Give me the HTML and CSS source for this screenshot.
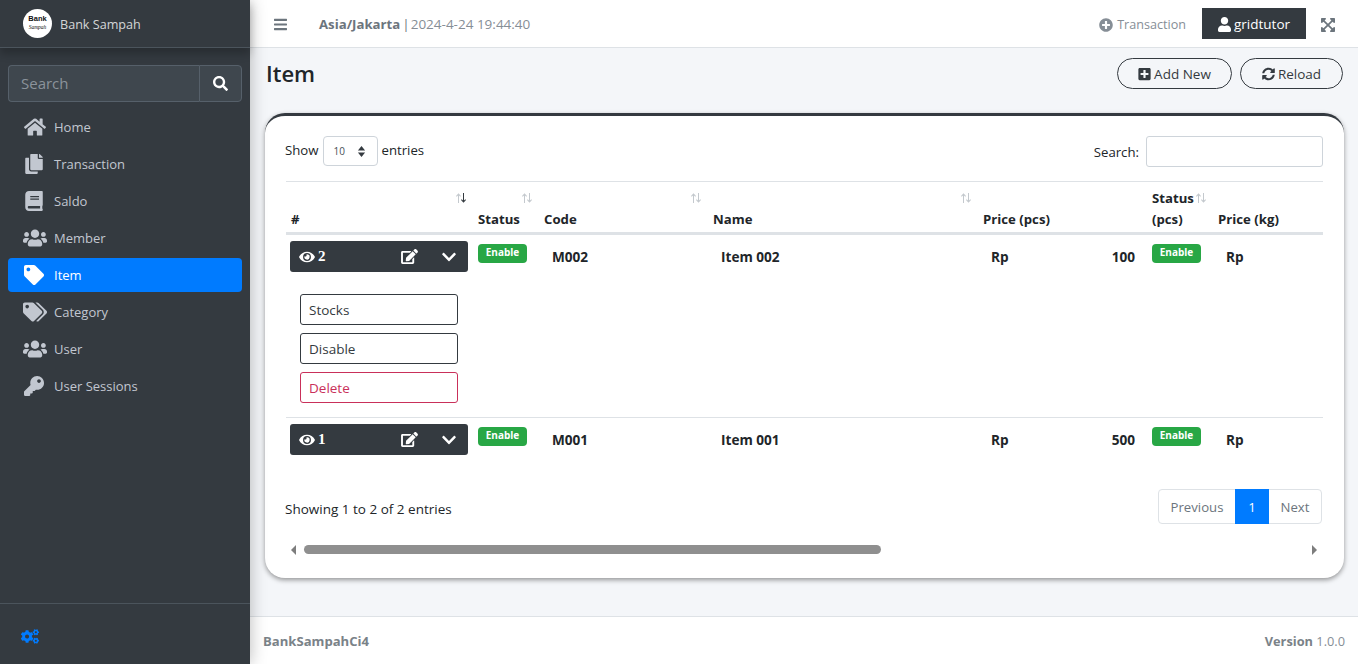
FILE: index.html
```html
<!DOCTYPE html>
<html lang="en">
<head>
<meta charset="utf-8">
<title>Item - Bank Sampah</title>
<link rel="stylesheet" href="styles.css">
</head>
<body>
<svg class="defs" aria-hidden="true">
<symbol id="i-home" viewBox="0 0 576 512"><path d="M280.37 148.26L96 300.11V464a16 16 0 0 0 16 16l112.06-.29a16 16 0 0 0 15.92-16V368a16 16 0 0 1 16-16h64a16 16 0 0 1 16 16v95.64a16 16 0 0 0 16 16.05L464 480a16 16 0 0 0 16-16V300L295.67 148.26a12.19 12.19 0 0 0-15.3 0zM571.6 251.47L488 182.56V44.05a12 12 0 0 0-12-12h-56a12 12 0 0 0-12 12v72.61L318.47 43a48 48 0 0 0-61 0L4.34 251.47a12 12 0 0 0-1.6 16.9l25.5 31A12 12 0 0 0 45.15 301l235.22-193.74a12.19 12.19 0 0 1 15.3 0L530.9 301a12 12 0 0 0 16.9-1.6l25.5-31a12 12 0 0 0-1.7-16.93z"/></symbol>
<symbol id="i-copy" viewBox="0 0 448 512"><path d="M320 448v40c0 13.255-10.745 24-24 24H24c-13.255 0-24-10.745-24-24V120c0-13.255 10.745-24 24-24h72v296c0 30.879 25.121 56 56 56h168zm0-344V0H152c-13.255 0-24 10.745-24 24v368c0 13.255 10.745 24 24 24h272c13.255 0 24-10.745 24-24V128H344c-13.2 0-24-10.8-24-24zm120.971-31.029L375.029 7.029A24 24 0 0 0 358.059 0H352v96h96v-6.059a24 24 0 0 0-7.029-16.97z"/></symbol>
<symbol id="i-book" viewBox="0 0 448 512"><path d="M448 360V24c0-13.3-10.7-24-24-24H96C43 0 0 43 0 96v320c0 53 43 96 96 96h328c13.3 0 24-10.7 24-24v-16c0-7.5-3.5-14.3-8.9-18.7-4.2-15.4-4.2-59.3 0-74.7 5.4-4.3 8.9-11.1 8.9-18.6zM128 134c0-3.3 2.7-6 6-6h212c3.3 0 6 2.7 6 6v20c0 3.3-2.7 6-6 6H134c-3.3 0-6-2.7-6-6v-20zm0 64c0-3.3 2.7-6 6-6h212c3.3 0 6 2.7 6 6v20c0 3.3-2.7 6-6 6H134c-3.3 0-6-2.7-6-6v-20zm253.4 250H96c-17.7 0-32-14.3-32-32 0-17.6 14.4-32 32-32h285.4c-1.9 17.1-1.9 46.9 0 64z"/></symbol>
<symbol id="i-users" viewBox="0 0 640 512"><path d="M96 224c35.3 0 64-28.7 64-64s-28.7-64-64-64-64 28.7-64 64 28.7 64 64 64zm448 0c35.3 0 64-28.7 64-64s-28.7-64-64-64-64 28.7-64 64 28.7 64 64 64zm32 32h-64c-17.6 0-33.5 7.1-45.1 18.6 40.3 22.1 68.9 62 75.1 109.4h66c17.7 0 32-14.3 32-32v-32c0-35.3-28.7-64-64-64zm-256 0c61.9 0 112-50.1 112-112S381.9 32 320 32 208 82.1 208 144s50.1 112 112 112zm76.8 32h-8.3c-20.8 10-43.9 16-68.5 16s-47.6-6-68.5-16h-8.3C179.6 288 128 339.6 128 403.2V432c0 26.5 21.5 48 48 48h288c26.5 0 48-21.5 48-48v-28.8c0-63.6-51.6-115.2-115.2-115.2zm-223.7-13.4C161.5 263.1 145.6 256 128 256H64c-35.3 0-64 28.7-64 64v32c0 17.7 14.3 32 32 32h65.9c6.3-47.4 34.9-87.3 75.2-109.4z"/></symbol>
<symbol id="i-tag" viewBox="0 0 512 512"><path d="M0 252.118V48C0 21.49 21.49 0 48 0h204.118a48 48 0 0 1 33.941 14.059l211.882 211.882c18.745 18.745 18.745 49.137 0 67.882L293.823 497.941c-18.745 18.745-49.137 18.745-67.882 0L14.059 286.059A48 48 0 0 1 0 252.118zM112 64c-26.51 0-48 21.49-48 48s21.49 48 48 48 48-21.49 48-48-21.49-48-48-48z"/></symbol>
<symbol id="i-tags" viewBox="0 0 640 512"><path d="M497.941 225.941L286.059 14.059A48 48 0 0 0 252.118 0H48C21.49 0 0 21.49 0 48v204.118a48 48 0 0 0 14.059 33.941l211.882 211.882c18.744 18.745 49.136 18.746 67.882 0l204.118-204.118c18.745-18.745 18.745-49.137 0-67.882zM112 160c-26.51 0-48-21.49-48-48s21.49-48 48-48 48 21.49 48 48-21.49 48-48 48zm513.941 133.823L421.823 497.941c-18.745 18.745-49.137 18.745-67.882 0l-.36-.36L527.64 323.522c16.999-16.999 26.36-39.6 26.36-63.64s-9.362-46.641-26.36-63.64L331.397 0h48.721a48 48 0 0 1 33.941 14.059l211.882 211.882c18.745 18.745 18.745 49.137 0 67.882z"/></symbol>
<symbol id="i-key" viewBox="0 0 512 512"><path d="M512 176.001C512 273.203 433.202 352 336 352c-11.22 0-22.19-1.062-32.827-3.069l-24.012 27.014A23.999 23.999 0 0 1 261.223 384H224v40c0 13.255-10.745 24-24 24h-40v40c0 13.255-10.745 24-24 24H24c-13.255 0-24-10.745-24-24v-78.059c0-6.365 2.529-12.47 7.029-16.971l161.802-161.802C163.108 213.814 160 195.271 160 176 160 78.798 238.797.001 335.999 0 433.488-.001 512 78.511 512 176.001zM336 128c0 26.51 21.49 48 48 48s48-21.49 48-48-21.49-48-48-48-48 21.49-48 48z"/></symbol>
<symbol id="i-search" viewBox="0 0 512 512"><path d="M505 442.7L405.3 343c-4.5-4.5-10.6-7-17-7H372c27.6-35.3 44-79.7 44-128C416 93.1 322.9 0 208 0S0 93.1 0 208s93.1 208 208 208c48.3 0 92.7-16.4 128-44v16.3c0 6.4 2.5 12.5 7 17l99.7 99.7c9.4 9.4 24.6 9.4 33.9 0l28.3-28.3c9.4-9.4 9.4-24.6.1-34zM208 336c-70.7 0-128-57.2-128-128 0-70.7 57.2-128 128-128 70.7 0 128 57.2 128 128 0 70.7-57.2 128-128 128z"/></symbol>
<symbol id="i-bars" viewBox="0 0 448 512"><path d="M16 132h416c8.837 0 16-7.163 16-16V76c0-8.837-7.163-16-16-16H16C7.163 60 0 67.163 0 76v40c0 8.837 7.163 16 16 16zm0 160h416c8.837 0 16-7.163 16-16v-40c0-8.837-7.163-16-16-16H16c-8.837 0-16 7.163-16 16v40c0 8.837 7.163 16 16 16zm0 160h416c8.837 0 16-7.163 16-16v-40c0-8.837-7.163-16-16-16H16c-8.837 0-16 7.163-16 16v40c0 8.837 7.163 16 16 16z"/></symbol>
<symbol id="i-plus-circle" viewBox="0 0 512 512"><path d="M256 8C119 8 8 119 8 256s111 248 248 248 248-111 248-248S393 8 256 8zm144 276c0 6.6-5.4 12-12 12h-92v92c0 6.6-5.4 12-12 12h-56c-6.6 0-12-5.4-12-12v-92h-92c-6.6 0-12-5.4-12-12v-56c0-6.6 5.4-12 12-12h92v-92c0-6.6 5.4-12 12-12h56c6.6 0 12 5.4 12 12v92h92c6.6 0 12 5.4 12 12v56z"/></symbol>
<symbol id="i-user" viewBox="0 0 448 512"><path d="M224 256c70.7 0 128-57.3 128-128S294.7 0 224 0 96 57.3 96 128s57.3 128 128 128zm89.6 32h-16.7c-22.2 10.2-46.9 16-72.9 16s-50.6-5.8-72.9-16h-16.7C60.2 288 0 348.2 0 422.4V464c0 26.5 21.5 48 48 48h352c26.5 0 48-21.5 48-48v-41.6c0-74.2-60.2-134.4-134.4-134.4z"/></symbol>
<symbol id="i-expand" viewBox="0 0 448 512"><path d="M448 344v112a23.94 23.94 0 0 1-24 24H312c-21.39 0-32.09-25.9-17-41l36.2-36.2L224 295.6 116.77 402.9 153 439c15.09 15.1 4.39 41-17 41H24a23.94 23.94 0 0 1-24-24V344c0-21.4 25.89-32.1 41-17l36.19 36.2L184.46 256 77.18 148.7 41 185c-15.1 15.1-41 4.4-41-17V56a23.94 23.94 0 0 1 24-24h112c21.39 0 32.09 25.9 17 41l-36.2 36.2L224 216.4l107.23-107.3L295 73c-15.09-15.1-4.39-41 17-41h112a23.94 23.94 0 0 1 24 24v112c0 21.4-25.89 32.1-41 17l-36.19-36.2L263.54 256l107.28 107.3L407 327.1c15.1-15.2 41-4.5 41 16.9z"/></symbol>
<symbol id="i-plus-square" viewBox="0 0 448 512"><path d="M400 32H48C21.5 32 0 53.5 0 80v352c0 26.5 21.5 48 48 48h352c26.5 0 48-21.5 48-48V80c0-26.5-21.5-48-48-48zm-32 252c0 6.6-5.4 12-12 12h-92v92c0 6.6-5.4 12-12 12h-56c-6.6 0-12-5.4-12-12v-92H92c-6.6 0-12-5.4-12-12v-56c0-6.6 5.4-12 12-12h92v-92c0-6.6 5.4-12 12-12h56c6.6 0 12 5.4 12 12v92h92c6.6 0 12 5.4 12 12v56z"/></symbol>
<symbol id="i-sync" viewBox="0 0 512 512"><path d="M370.72 133.28C339.458 104.008 298.888 87.962 255.848 88c-77.458.068-144.328 53.178-162.791 126.85-1.344 5.363-6.122 9.15-11.651 9.15H24.103c-7.498 0-13.194-6.807-11.807-14.176C33.933 94.924 134.813 8 256 8c66.448 0 126.791 26.136 171.315 68.685L463.03 40.97C478.149 25.851 504 36.559 504 57.941V192c0 13.255-10.745 24-24 24H345.941c-21.382 0-32.09-25.851-16.971-40.971l41.75-41.749zM32 296h134.059c21.382 0 32.09 25.851 16.971 40.971l-41.75 41.75c31.262 29.273 71.835 45.319 114.876 45.28 77.418-.07 144.315-53.144 162.787-126.849 1.344-5.363 6.122-9.15 11.651-9.15h57.304c7.498 0 13.194 6.807 11.807 14.176C478.067 417.076 377.187 504 256 504c-66.448 0-126.791-26.136-171.315-68.685L48.97 471.03C33.851 486.149 8 475.441 8 454.059V320c0-13.255 10.745-24 24-24z"/></symbol>
<symbol id="i-eye" viewBox="0 0 576 512"><path d="M572.52 241.4C518.29 135.59 410.93 64 288 64S57.68 135.64 3.48 241.41a32.35 32.35 0 0 0 0 29.19C57.71 376.41 165.07 448 288 448s230.32-71.64 284.52-177.41a32.35 32.35 0 0 0 0-29.19zM288 400a144 144 0 1 1 144-144 143.93 143.93 0 0 1-144 144zm0-240a95.31 95.31 0 0 0-25.31 3.79 47.85 47.85 0 0 1-66.9 66.9A95.78 95.78 0 1 0 288 160z"/></symbol>
<symbol id="i-edit" viewBox="0 0 576 512"><path d="M402.6 83.2l90.2 90.2c3.8 3.8 3.8 10 0 13.8L274.4 405.6l-92.8 10.3c-12.4 1.4-22.9-9.1-21.5-21.5l10.3-92.8L388.8 83.2c3.8-3.8 10-3.8 13.8 0zm162-22.9l-48.8-48.8c-15.2-15.2-39.9-15.2-55.2 0l-35.4 35.4c-3.8 3.8-3.8 10 0 13.8l90.2 90.2c3.8 3.8 10 3.8 13.8 0l35.4-35.4c15.2-15.3 15.2-40 0-55.2zM384 346.2V448H64V128h229.8c3.2 0 6.2-1.3 8.5-3.5l40-40c7.6-7.6 2.2-20.5-8.5-20.5H48C21.5 64 0 85.5 0 112v352c0 26.5 21.5 48 48 48h352c26.5 0 48-21.5 48-48V306.2c0-10.7-12.9-16-20.5-8.5l-40 40c-2.2 2.3-3.5 5.3-3.5 8.5z"/></symbol>
<symbol id="i-chevron" viewBox="0 0 448 512"><path d="M207.029 381.476L12.686 187.132c-9.373-9.373-9.373-24.569 0-33.941l22.667-22.667c9.357-9.357 24.522-9.375 33.901-.04L224 284.505l154.745-154.021c9.379-9.335 24.544-9.317 33.901.04l22.667 22.667c9.373 9.373 9.373 24.569 0 33.941L240.971 381.476c-9.373 9.372-24.569 9.372-33.942 0z"/></symbol>
<symbol id="i-cogs" viewBox="0 0 640 512"><path d="M512.1 191l-8.2 14.3c-3 5.3-9.4 7.5-15.1 5.4-11.8-4.4-22.6-10.7-32.1-18.6-4.6-3.8-5.8-10.5-2.8-15.7l8.2-14.3c-6.9-8-12.3-17.3-15.9-27.4h-16.5c-6 0-11.2-4.3-12.2-10.3-2-12-2.1-24.6 0-37.1 1-6 6.2-10.4 12.2-10.4h16.5c3.6-10.1 9-19.4 15.9-27.4l-8.2-14.3c-3-5.2-1.9-11.9 2.8-15.7 9.5-7.9 20.4-14.2 32.1-18.6 5.7-2.1 12.1.1 15.1 5.4l8.2 14.3c10.5-1.9 21.2-1.9 31.7 0L552 6.3c3-5.3 9.4-7.5 15.1-5.4 11.8 4.4 22.6 10.7 32.1 18.6 4.6 3.8 5.8 10.5 2.8 15.7l-8.2 14.3c6.9 8 12.3 17.3 15.9 27.4h16.5c6 0 11.2 4.3 12.2 10.3 2 12 2.1 24.6 0 37.1-1 6-6.2 10.4-12.2 10.4h-16.5c-3.6 10.1-9 19.4-15.9 27.4l8.2 14.3c3 5.2 1.9 11.9-2.8 15.7-9.5 7.9-20.4 14.2-32.1 18.6-5.7 2.1-12.1-.1-15.1-5.4l-8.2-14.3c-10.4 1.9-21.2 1.9-31.7 0zm-10.5-58.8c38.5 29.6 82.4-14.3 52.8-52.8-38.5-29.7-82.4 14.3-52.8 52.8zM386.3 286.1l33.7 16.8c10.1 5.8 14.5 18.1 10.5 29.1-8.9 24.2-26.4 46.4-42.6 65.8-7.4 8.9-20.2 11.1-30.3 5.3l-29.1-16.8c-16 13.7-34.6 24.6-54.9 31.7v33.6c0 11.6-8.3 21.6-19.7 23.6-24.6 4.2-50.4 4.4-75.9 0-11.5-2-20-11.9-20-23.6V418c-20.3-7.2-38.9-18-54.9-31.7L74 403c-10 5.8-22.9 3.6-30.3-5.3-16.2-19.4-33.3-41.6-42.2-65.7-4-10.9.4-23.2 10.5-29.1l33.3-16.8c-3.9-20.9-3.9-42.4 0-63.4L12 205.8c-10.1-5.8-14.6-18.1-10.5-29 8.9-24.2 26-46.4 42.2-65.8 7.4-8.9 20.2-11.1 30.3-5.3l29.1 16.8c16-13.7 34.6-24.6 54.9-31.7V57.1c0-11.5 8.2-21.5 19.6-23.5 24.6-4.2 50.5-4.4 76-.1 11.5 2 20 11.9 20 23.6v33.6c20.3 7.2 38.9 18 54.9 31.7l29.1-16.8c10-5.8 22.9-3.6 30.3 5.3 16.2 19.4 33.2 41.6 42.1 65.8 4 10.9.1 23.2-10 29.1l-33.7 16.8c3.9 21 3.9 42.5 0 63.5zm-117.6 21.1c59.2-77-28.7-164.9-105.7-105.7-59.2 77 28.7 164.9 105.7 105.7zm243.4 182.7l-8.2 14.3c-3 5.3-9.4 7.5-15.1 5.4-11.8-4.4-22.6-10.7-32.1-18.6-4.6-3.8-5.8-10.5-2.8-15.7l8.2-14.3c-6.9-8-12.3-17.3-15.9-27.4h-16.5c-6 0-11.2-4.3-12.2-10.3-2-12-2.1-24.6 0-37.1 1-6 6.2-10.4 12.2-10.4h16.5c3.6-10.1 9-19.4 15.9-27.4l-8.2-14.3c-3-5.2-1.9-11.9 2.8-15.7 9.5-7.9 20.4-14.2 32.1-18.6 5.7-2.1 12.1.1 15.1 5.4l8.2 14.3c10.5-1.9 21.2-1.9 31.7 0l8.2-14.3c3-5.3 9.4-7.5 15.1-5.4 11.8 4.4 22.6 10.7 32.1 18.6 4.6 3.8 5.8 10.5 2.8 15.7l-8.2 14.3c6.9 8 12.3 17.3 15.9 27.4h16.5c6 0 11.2 4.3 12.2 10.3 2 12 2.1 24.6 0 37.1-1 6-6.2 10.4-12.2 10.4h-16.5c-3.6 10.1-9 19.4-15.9 27.4l8.2 14.3c3 5.2 1.9 11.9-2.8 15.7-9.5 7.9-20.4 14.2-32.1 18.6-5.7 2.1-12.1-.1-15.1-5.4l-8.2-14.3c-10.4 1.9-21.2 1.9-31.7 0zM501.6 431c38.5 29.6 82.4-14.3 52.8-52.8-38.5-29.6-82.4 14.3-52.8 52.8z"/></symbol>
<symbol id="i-up" viewBox="0 0 5 10"><path d="M2 10V2.4L.7 3.7 0 3 2.5.2 5 3l-.7.7L3 2.4V10z"/></symbol>
<symbol id="i-down" viewBox="0 0 5 10"><path d="M2 0v7.6L.7 6.3 0 7l2.5 2.8L5 7l-.7-.7L3 7.6V0z"/></symbol>
</svg>

<div class="app">
  <aside class="sidebar">
    <a class="brand">
      <span class="logo"><b>Bank</b><i>Sampah</i></span>
      <span class="brand-text">Bank Sampah</span>
    </a>
    <form class="side-search">
      <input class="side-input" type="text" placeholder="Search">
      <button class="side-btn" type="button"><svg class="ic-search"><use href="#i-search"/></svg></button>
    </form>
    <nav class="nav">
      <a class="nav-item"><span class="nav-ic"><svg class="ic-home"><use href="#i-home"/></svg></span>Home</a>
      <a class="nav-item"><span class="nav-ic"><svg class="ic-nav"><use href="#i-copy"/></svg></span>Transaction</a>
      <a class="nav-item"><span class="nav-ic"><svg class="ic-nav"><use href="#i-book"/></svg></span>Saldo</a>
      <a class="nav-item"><span class="nav-ic"><svg class="ic-wide"><use href="#i-users"/></svg></span>Member</a>
      <a class="nav-item active"><span class="nav-ic"><svg class="ic-nav"><use href="#i-tag"/></svg></span>Item</a>
      <a class="nav-item"><span class="nav-ic"><svg class="ic-wide"><use href="#i-tags"/></svg></span>Category</a>
      <a class="nav-item"><span class="nav-ic"><svg class="ic-wide"><use href="#i-users"/></svg></span>User</a>
      <a class="nav-item"><span class="nav-ic"><svg class="ic-nav"><use href="#i-key"/></svg></span>User Sessions</a>
    </nav>
    <div class="side-foot"><svg class="ic-cogs"><use href="#i-cogs"/></svg></div>
  </aside>

  <div class="main">
    <header class="topbar">
      <svg class="ic-bars"><use href="#i-bars"/></svg>
      <div class="clock"><b>Asia/Jakarta</b><span class="sep">|</span>2024-4-24 19:44:40</div>
      <a class="top-link"><svg class="ic-plus"><use href="#i-plus-circle"/></svg>Transaction</a>
      <a class="top-user"><svg class="ic-user"><use href="#i-user"/></svg>gridtutor</a>
      <svg class="ic-expand"><use href="#i-expand"/></svg>
    </header>

    <main class="content">
      <div class="page-head">
        <h1 class="page-title">Item</h1>
        <div class="page-actions">
          <a class="pill pill-add"><svg class="ic-pill"><use href="#i-plus-square"/></svg>Add New</a>
          <a class="pill pill-reload"><svg class="ic-pill"><use href="#i-sync"/></svg>Reload</a>
        </div>
      </div>

      <section class="card">
        <div class="dt-top">
          <div class="dt-length">Show <span class="select">10<svg class="sel-arrows" viewBox="0 0 10 14"><path d="M5 1l4 5H1zM5 13L1 8h8z"/></svg></span> entries</div>
          <label class="dt-filter">Search: <input class="dt-input" type="search"></label>
        </div>

        <div class="table-clip">
          <table class="dt">
            <colgroup>
              <col class="c-act"><col class="c-status"><col class="c-code"><col class="c-name"><col class="c-price"><col class="c-status2"><col class="c-kg">
            </colgroup>
            <thead>
              <tr>
                <th>#<span class="sort on"><svg class="arr"><use href="#i-up"/></svg><svg class="arr arr-dn"><use href="#i-down"/></svg></span></th>
                <th>Status<span class="sort"><svg class="arr"><use href="#i-up"/></svg><svg class="arr arr-dn"><use href="#i-down"/></svg></span></th>
                <th>Code<span class="sort"><svg class="arr"><use href="#i-up"/></svg><svg class="arr arr-dn"><use href="#i-down"/></svg></span></th>
                <th>Name<span class="sort"><svg class="arr"><use href="#i-up"/></svg><svg class="arr arr-dn"><use href="#i-down"/></svg></span></th>
                <th>Price (pcs)</th>
                <th>Status (pcs)<span class="sort"><svg class="arr"><use href="#i-up"/></svg><svg class="arr arr-dn"><use href="#i-down"/></svg></span></th>
                <th>Price (kg)</th>
              </tr>
            </thead>
            <tbody>
              <tr>
                <td class="td-act">
                  <div class="act-bar">
                    <span class="act-id"><svg class="ic-eye"><use href="#i-eye"/></svg>2</span>
                    <svg class="ic-edit"><use href="#i-edit"/></svg>
                    <svg class="ic-chev"><use href="#i-chevron"/></svg>
                  </div>
                  <div class="act-menu">
                    <a class="act-btn">Stocks</a>
                    <a class="act-btn">Disable</a>
                    <a class="act-btn danger">Delete</a>
                  </div>
                </td>
                <td class="td-badge"><span class="badge">Enable</span></td>
                <td>M002</td>
                <td>Item 002</td>
                <td><div class="money"><span>Rp</span><span>100</span></div></td>
                <td class="td-badge"><span class="badge">Enable</span></td>
                <td><div class="money"><span>Rp</span></div></td>
              </tr>
              <tr>
                <td class="td-act">
                  <div class="act-bar">
                    <span class="act-id"><svg class="ic-eye"><use href="#i-eye"/></svg>1</span>
                    <svg class="ic-edit"><use href="#i-edit"/></svg>
                    <svg class="ic-chev"><use href="#i-chevron"/></svg>
                  </div>
                </td>
                <td class="td-badge"><span class="badge">Enable</span></td>
                <td>M001</td>
                <td>Item 001</td>
                <td><div class="money"><span>Rp</span><span>500</span></div></td>
                <td class="td-badge"><span class="badge">Enable</span></td>
                <td><div class="money"><span>Rp</span></div></td>
              </tr>
            </tbody>
          </table>
        </div>

        <div class="dt-bottom">
          <div class="dt-info">Showing 1 to 2 of 2 entries</div>
          <div class="pager">
            <a class="page page-prev">Previous</a>
            <a class="page current">1</a>
            <a class="page page-next">Next</a>
          </div>
        </div>

        <div class="hscroll">
          <span class="arrow-l"></span>
          <div class="track"><div class="thumb"></div></div>
          <span class="arrow-r"></span>
        </div>
      </section>
    </main>

    <footer class="footer">
      <b class="foot-name">BankSampahCi4</b>
      <span class="foot-ver"><b>Version</b> 1.0.0</span>
    </footer>
  </div>
</div>
</body>
</html>
```

FILE: styles.css
```css
* { box-sizing: border-box; }
html, body { height: 100%; margin: 0; }
body {
  font-family: "Open Sans", "Noto Sans", "Liberation Sans", sans-serif;
  font-size: 13.5px;
  line-height: 21px;
  color: #212529;
  background: #f4f6f9;
  overflow: hidden;
}
svg { fill: currentColor; display: block; flex: none; }
.defs { width: 0; height: 0; position: absolute; }
.app { display: flex; height: 664px; }

/* sidebar */
.sidebar {
  width: 250px;
  flex: none;
  background: #343a40;
  color: #c2c7d0;
  display: flex;
  flex-direction: column;
  box-shadow: 0 0 16px rgba(0,0,0,.28);
  z-index: 2;
}
.brand {
  height: 48px;
  display: flex;
  align-items: center;
  gap: 8px;
  padding-left: 23px;
  border-bottom: 1px solid #4b545c;
  box-shadow: 0 6px 8px rgba(0,0,0,.22);
  color: rgba(255,255,255,.8);
}
.logo {
  width: 29px;
  height: 29px;
  border-radius: 50%;
  background: #fff;
  color: #111;
  display: flex;
  flex-direction: column;
  align-items: center;
  justify-content: center;
  font-family: "Liberation Sans", sans-serif;
  line-height: 8px;
  margin-top: -1px;
}
.logo b { font-size: 7.5px; }
.logo i { font-size: 5.5px; font-family: "Liberation Serif", serif; }
.brand-text { font-size: 12.6px; margin-top: 1px; }
.side-search { display: flex; margin: 17px 8px 8px; height: 37px; }
.side-input {
  flex: 1;
  min-width: 0;
  background: #3f474e;
  border: 1px solid #56606a;
  border-right: 0;
  border-radius: 4px 0 0 4px;
  padding: 0 12px 2px;
  font: 15px "Open Sans", sans-serif;
  color: #fff;
}
.side-input::placeholder { color: #8b939b; }
.side-btn {
  width: 43px;
  background: #3f474e;
  border: 1px solid #56606a;
  border-radius: 0 4px 4px 0;
  color: #fff;
  display: flex;
  align-items: center;
  justify-content: center;
  padding: 0;
}
.ic-search { width: 15px; height: 15px; }
.nav { display: flex; flex-direction: column; gap: 3px; padding: 0 8px; font-size: 13px; }
.nav-item {
  height: 34px;
  border-radius: 4px;
  display: flex;
  align-items: center;
  padding-left: 13px;
}
.nav-item.active { background: #007bff; color: #fff; }
.nav-ic { width: 33px; display: flex; align-items: center; padding-left: 3px; }
.ic-nav { width: 20px; height: 20px; }
.ic-home { width: 22px; height: 20px; }
.ic-wide { width: 24px; height: 20px; margin-left: -1px; }
.side-foot {
  margin-top: auto;
  height: 61px;
  border-top: 1px solid #4b545c;
  padding: 25px 0 0 21px;
  color: #007bff;
}
.ic-cogs { width: 18px; height: 15px; }

/* main */
.main { flex: 1; min-width: 0; display: flex; flex-direction: column; }
.topbar {
  height: 48px;
  flex: none;
  background: #fff;
  border-bottom: 1px solid #dee2e6;
  display: flex;
  align-items: center;
  padding: 2px 23px 0 24px;
  color: #6c757d;
}
.ic-bars { width: 13px; height: 15px; margin-right: 32px; }
.clock { flex: 1; color: #868e96; }
.clock b { color: #6c757d; font-size: 13.2px; }
.sep { margin: 0 1px 0 2px; color: #6c757d; }
.top-link { display: flex; align-items: center; gap: 4px; color: #868e96; margin-right: 16px; font-size: 12.6px; }
.ic-plus { width: 14px; height: 14px; }
.top-user {
  width: 104px;
  height: 31px;
  margin-top: -2px;
  padding-top: 2px;
  background: #343a40;
  color: #fff;
  display: flex;
  align-items: center;
  justify-content: center;
  gap: 3px;
}
.ic-user { width: 13px; height: 15px; }
.ic-expand { width: 14px; height: 16px; margin-left: 15px; }

.content { flex: 1; min-height: 0; padding: 0 14px 0 15px; }
.page-head { display: flex; align-items: center; justify-content: space-between; height: 65px; padding: 0 0 14px 1px; }
.page-title { margin: -2px 0 0; font-size: 22px; font-weight: 600; line-height: 30px; color: #212529; }
.page-actions { display: flex; gap: 8px; padding-right: 1px; }
.pill {
  height: 31px;
  padding-top: 1px;
  border: 1px solid #343a40;
  border-radius: 16px;
  display: flex;
  align-items: center;
  justify-content: center;
  gap: 3px;
  color: #343a40;
}
.pill-add { width: 115px; }
.pill-reload { width: 103px; }
.ic-pill { width: 13px; height: 14px; }

.card {
  height: 465px;
  background: #fff;
  border-top: 3px solid #343a40;
  border-radius: 20px;
  box-shadow: 0 2px 5px rgba(0,0,0,.4);
  padding: 20px 21px 0 20px;
}
.dt-top { display: flex; justify-content: space-between; height: 45px; font-size: 13.2px; }
.dt-length { display: flex; align-items: flex-start; gap: 5px; line-height: 28px; }
.select {
  width: 55px;
  height: 30px;
  margin-right: -2px;
  border: 1px solid #ced4da;
  border-radius: 4px;
  display: flex;
  align-items: center;
  justify-content: space-between;
  padding: 0 11px 0 9px;
  font-size: 10px;
  color: #495057;
}
.sel-arrows { width: 9px; height: 13px; fill: #343a40; }
.dt-filter { display: flex; gap: 7px; align-items: flex-start; line-height: 32px; }
.dt-input { width: 177px; height: 31px; border: 1px solid #ced4da; border-radius: 3px; background: #fff; padding: 0 8px; }

.table-clip { overflow: hidden; margin-left: 1px; }
.dt { table-layout: fixed; width: 1400px; border-collapse: collapse; font-size: 13.2px; }
.c-act { width: 187px; }
.c-status { width: 66px; }
.c-code { width: 169px; }
.c-name { width: 270px; }
.c-price { width: 169px; }
.c-status2 { width: 66px; }
.c-kg { width: 473px; }
.dt th {
  position: relative;
  text-align: left;
  vertical-align: bottom;
  padding: 6px 5px 2px;
  font-weight: 700;
  border-top: 1px solid #dee2e6;
  border-bottom: 3px solid #dee2e6;
  color: #212529;
  height: 50px;
}
.sort {
  position: absolute;
  top: 11px;
  right: 7px;
  display: flex;
  color: #c4c9ce;
}
.arr { width: 5px; height: 10px; }
.sort.on .arr-dn { color: #343a40; }
.dt td {
  vertical-align: top;
  padding: 11px 12px 8px 13px;
  font-size: 13.6px;
  font-weight: 700;
  border-bottom: 1px solid #dee2e6;
  color: #212529;
}
.dt tbody tr:last-child td { border-bottom: 0; }
.dt .td-act { padding: 6px 5px 14px 4px; }
.dt .td-badge { padding: 9px 5px 0; line-height: 18px; }
.badge {
  display: inline-block;
  width: 49px;
  height: 19px;
  background: #28a745;
  color: #fff;
  border-radius: 4px;
  font-size: 10px;
  font-weight: 700;
  line-height: 17px;
  text-align: center;
  vertical-align: top;
}
.money { display: flex; justify-content: space-between; }
.act-bar {
  height: 31px;
  width: 178px;
  background: #343a40;
  border-radius: 3px;
  color: #fff;
  display: flex;
  align-items: center;
  padding-left: 9px;
}
.act-id { flex: 1; display: flex; align-items: center; gap: 3px; font-family: "Liberation Serif", serif; font-size: 15px; font-weight: 700; }
.ic-eye { width: 16px; height: 14px; }
.ic-edit { width: 17px; height: 15px; }
.ic-chev { width: 14px; height: 16px; margin: 0 12px 0 24px; }
.act-menu { display: flex; flex-direction: column; gap: 8px; padding: 22px 0 0 10px; }
.act-btn {
  width: 158px;
  height: 31px;
  border: 1px solid #343a40;
  border-radius: 3px;
  font-size: 13.5px;
  font-weight: 400;
  display: flex;
  align-items: center;
  padding: 1px 0 0 8px;
  color: #343a40;
}
.act-btn.danger { border-color: #c9305a; color: #c9305a; }

.dt-bottom { display: flex; justify-content: space-between; align-items: center; height: 35px; margin-top: 20px; padding-right: 1px; }
.dt-info { padding-top: 6px; }
.pager { display: flex; height: 35px; border: 1px solid #dee2e6; border-radius: 4px; }
.page { display: flex; align-items: center; justify-content: center; color: #6c757d; font-size: 13.2px; padding-top: 2px; }
.page-prev { width: 76px; }
.page-next { width: 52px; }
.page.current { background: #007bff; color: #fff; width: 34px; margin: -1px 0; }
.hscroll { display: flex; align-items: center; height: 9px; margin-top: 21px; padding-left: 6px; }
.arrow-l { border: 5px solid transparent; border-right: 5px solid #7d7d7d; border-left: 0; }
.arrow-r { border: 5px solid transparent; border-left: 5px solid #7d7d7d; border-right: 0; margin-right: 6px; }
.track { flex: 1; padding-left: 8px; }
.thumb { width: 577px; height: 9px; border-radius: 5px; background: #8f8f8f; }

.footer {
  height: 48px;
  flex: none;
  background: #fff;
  border-top: 1px solid #dee2e6;
  display: flex;
  align-items: center;
  justify-content: space-between;
  padding: 2px 13px 0 13px;
  color: #868e96;
  font-size: 12.8px;
}
.footer b { color: #7a8288; }
.foot-name { font-size: 13.1px; }
```
